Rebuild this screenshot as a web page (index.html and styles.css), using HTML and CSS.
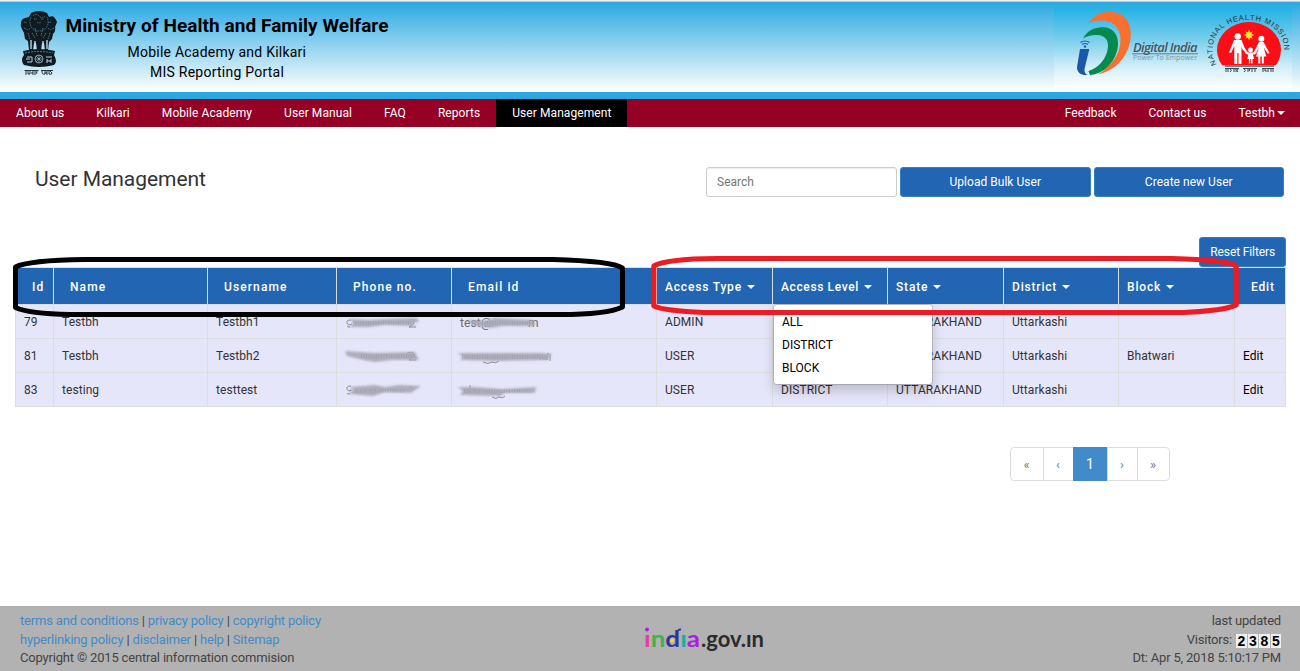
FILE: index.html
```html
<!DOCTYPE html>
<html lang="en">
<head>
<meta charset="utf-8">
<title>User Management</title>
<link rel="stylesheet" href="styles.css">
</head>
<body>
<header class="banner">
  <div class="brand">
    <svg class="emblem" width="38" height="66" viewBox="0 0 38 66">
      <g fill="#101a21">
        <path d="M11 2Q19-2 27 2L29 6Q34 3 37 11L35 16Q36 20 33 23L32 28L29 31L28 39H25L24 32L22 32L21 39H17L16 32L14 32L13 39H9L8 30L5 28L4 22L1 16Q0 8 5 7L9 6Z"/>
        <path d="M3 40Q19 36 35 40L34 44Q38 51 34 54Q19 58 4 54Q0 49 4 44Z"/>
      </g>
      <g fill="none" stroke="#6fb4d2" stroke-width=".6">
        <path d="M13 5q3-3 6 0t6 0M14 8h3m4 0h3M17 11q2 2 4 0M4 11l3 1m24-1l-3 1M11 6q-3 7 2 12q6 4 12 0q5-5 2-12M4 17q5 3 6 0M34 17q-5 3-6 0M15 17l2 8m6-8l-2 8M8 22l2 6m20-6l-2 6M12 22l3 5m11-5l-3 5" stroke-dasharray="1.5 1"/>
        <path d="M11 29v9m4-8v8m8-8v8m4-9v9" stroke="#c4e6f3" stroke-width="1.3"/>
        <path d="M5 42q14-3 28 0" stroke-dasharray="2 1"/>
        <g stroke="#c4e6f3"><circle cx="19" cy="48" r="4"/><path d="M19 44v8m-4-4h8m-7-3l6 6m0-6l-6 6" stroke-width=".5"/>
        <path d="M7 46h5v5h-5m3-3H6M26 46h6m-5 2v4m4-4v4m-4-2h4" stroke-width=".9"/></g>
      </g>
      <g stroke="#17232b" fill="none" stroke-width=".9"><path d="M4.500 59.500h14M21 59.500h12M6 60v4m2-4v3h2v-3m3 0v4m0-2h-2m4-2v4m2-4q-1 3 0 3M22 60q0 4 3 3v-3m2 0v4m0-2h-2m4-2v3q3 1 3-1l-2-2"/></g>
    </svg>
    <div class="brand-text">
      <div class="ministry">Ministry of Health and Family Welfare</div>
      <div class="line academy">Mobile Academy and Kilkari</div>
      <div class="line portal">MIS Reporting Portal</div>
    </div>
  </div>
  <svg class="partners" width="238" height="81" viewBox="1054 7 238 81">
    <defs>
      <linearGradient id="sky" x1="0" y1="0" x2="0" y2="1"><stop offset="0" stop-color="#1fb1e4"/><stop offset=".4" stop-color="#78ceec"/><stop offset=".75" stop-color="#d4eff9"/><stop offset="1" stop-color="#fff"/></linearGradient>
      <path id="arc" d="M1216.500 64.500C1206 46 1216 20.500 1248 20C1281 20.500 1291 46 1280 65"/>
      <clipPath id="dome"><rect x="1210" y="15" width="80" height="50.500"/></clipPath>
    </defs>
    <rect x="1054" y="7" width="238" height="81" fill="url(#sky)"/>
    <path fill="#f96f2f" d="M1089 23C1096 11 1110 9 1120 14C1132 20 1133 36 1128 49C1122 63 1112 71 1098 74.500C1112 66 1121 52 1120.500 39C1120 24 1109 20 1101 20.500C1096 20.500 1092 21.500 1089 23Z"/>
    <path fill="#048a4c" d="M1083 38.500C1088 29 1097 26 1106 27.500C1116 29.500 1119.500 39 1117.500 49C1114 64 1103 74 1090 75.200L1088.500 71C1099 68 1107 58 1108 47C1108.500 39 1104 35.500 1098 35C1092 34.500 1087 36 1083 38.500Z"/>
    <path fill="#1b57a8" d="M1080 49H1089.300L1084.500 69Q1084 74 1088 75C1081 75.500 1077 73 1077 67Z"/>
    <g fill="none" stroke="#1b57a8" stroke-width="1.100"><path d="M1080.500 42.500q4.500-3 9 0M1082 44.500q3-2 6 0"/><circle cx="1085" cy="46.500" r=".7"/></g>
    <text class="di-name" x="1133" y="51.800" textLength="64.500">Digital India</text>
    <path d="M1132 53.800h66" stroke="#55636b" stroke-width=".8"/>
    <text class="di-tag" x="1133" y="60.300" textLength="64">Power To Empower</text>
    <ellipse cx="1249" cy="50" rx="32" ry="28" fill="#fd0d16" clip-path="url(#dome)"/>
    <path d="M1225 66.200h49" stroke="#222" stroke-width=".8"/>
    <g fill="#ffe326"><circle cx="1249" cy="35" r="3"/><path d="M1249 29.500l1 3h-2zM1249 40.500l1-3h-2zM1243.500 35l3-1v2zM1254.500 35l-3-1v2zM1245 31l3 2-1 1zM1253 31l-3 2 1 1zM1245 39l3-2-1-1zM1253 39l-3-2 1-1z"/></g>
    <g fill="#fff">
      <circle cx="1237.700" cy="36.500" r="3.200"/><circle cx="1261.300" cy="38.700" r="3"/><circle cx="1250.500" cy="50" r="2.400"/>
      <path d="M1234 40h7.500l3 7.500 4 6-1.500 1-4.800-5.500-.7-3V64h-3V53h-1.200v11h-3V46l-3.300 7-2-.6z"/>
      <path d="M1259 42h4.500l6 11-1.700.8-4-6.300 2.500 9h-2.500v7h-2v-7h-1.500v7h-2v-7h-2.300l3-9-4 7-2-.7z"/>
      <path d="M1248.500 52.500h4.200l3.500-.8.500 1.200-3.700 1.800 1.200 4.300h-1.700v4.500h-1.300v-4.500h-1v4.500h-1.300v-4.500h-1.600l1-4.300-3.500-1.700.5-1.200z"/>
    </g>
    <text class="nhm"><textPath href="#arc" textLength="120">NATIONAL HEALTH MISSION</textPath></text>
    <g fill="none" stroke="#2a3338" stroke-width=".9"><path d="M1225 68.500h14M1243 68.500h14M1262 68.500h12M1226 69v3m2-3v3m2-3q3 1 0 3m4-3v3m2-3v3m2-3q-2 2 0 3M1244 69q3 1 0 3m4-3v3m2-3q-2 1 0 2m2-2v3m3-3v3M1263 69v3m2-3v2h2m1-2v3m3-3v3m2-3v3"/></g>
  </svg>
</header>
<nav class="nav">
  <a>About us</a><a>Kilkari</a><a>Mobile Academy</a><a>User Manual</a><a>FAQ</a><a>Reports</a><a class="active">User Management</a>
  <a class="push">Feedback</a><a>Contact us</a><a class="account">Testbh<i class="caret"></i></a>
</nav>
<main class="content">
  <div class="toolbar">
    <h1>User Management</h1>
    <div class="actions">
      <input class="search" type="text" placeholder="Search">
      <button class="btn wide">Upload Bulk User</button>
      <button class="btn wide">Create new User</button>
    </div>
  </div>
  <div class="reset"><button class="btn">Reset Filters</button></div>
  <div class="table-wrap">
    <table class="users">
      <colgroup><col class="c-id"><col class="c-name"><col class="c-user"><col class="c-phone"><col class="c-email"><col class="c-b"><col class="c-a"><col class="c-b"><col class="c-a"><col class="c-b"><col class="c-edit"></colgroup>
      <thead><tr>
        <th class="plain">Id</th><th class="plain">Name</th><th class="plain">Username</th><th class="plain">Phone no.</th><th class="plain">Email id</th>
        <th>Access Type<i class="caret"></i></th>
        <th class="level">Access Level<i class="caret"></i>
          <ul class="menu"><li>ALL</li><li>DISTRICT</li><li>BLOCK</li></ul></th>
        <th>State<i class="caret"></i></th><th>District<i class="caret"></i></th><th>Block<i class="caret"></i></th><th class="plain edit">Edit</th>
      </tr></thead>
      <tbody>
        <tr><td>79</td><td>Testbh</td><td>Testbh1</td>
          <td><svg class="smudge" width="82" height="22" viewBox="0 0 82 22"><g class="trace"><path d="M6 8q-5 0-4 3t5 1M5 15q-3 0-3-1M64 8q5-1 5 2t-5 5h7"/></g><path class="smear" d="M4 7L24 8 40 7 72 6 74 10 66 11 72 14 40 13 24 15 4 15 9 11Z"/><path class="grain" d="M8 11h60"/></svg></td>
          <td><svg class="smudge" width="100" height="22" viewBox="0 0 100 22"><text x="0" y="15">test@</text><text x="68" y="15">m</text><path class="smear" d="M8 8L24 9 35 6 70 8 75 10 74 14 42 14 32 16 12 13Z"/><path class="grain" d="M12 11h62"/></svg></td>
          <td>ADMIN</td><td></td><td>UTTARAKHAND</td><td>Uttarkashi</td><td></td><td></td></tr>
        <tr><td>81</td><td>Testbh</td><td>Testbh2</td>
          <td><svg class="smudge" width="82" height="22" viewBox="0 0 82 22"><g class="trace"><path d="M62 7q6-2 7 1t-5 6h7"/></g><path class="smear" d="M0 5L16 6 30 7 70 6 74 14 48 14 30 16 18 14 2 10Z"/><path class="grain" d="M16 10h54"/></svg></td>
          <td><svg class="smudge" width="100" height="22" viewBox="0 0 100 22"><g class="trace"><path d="M23 16q5 3 9 0q4 2 7-1M80 14q2-10 4 0q1-9 3 0v-6q4-2 3 7"/></g><path class="smear" d="M-2 7L35 7 80 7 92 8 88 14 34 15 0 14 3 11Z"/><path class="grain" d="M2 11h84"/></svg></td>
          <td>USER</td><td>DISTRICT</td><td>UTTARAKHAND</td><td>Uttarkashi</td><td>Bhatwari</td><td class="link">Edit</td></tr>
        <tr><td>83</td><td>testing</td><td>testtest</td>
          <td><svg class="smudge" width="82" height="22" viewBox="0 0 82 22"><g class="trace"><path d="M6 6q-5 0-4 3t5 1M5 14q-3 0-3-1M64 7q5-1 4 2"/></g><path class="smear" d="M4 7L30 5 40 7 54 5 76 6 66 13 40 12 28 16 4 14 9 10Z"/><path class="grain" d="M5 11h54"/></svg></td>
          <td><svg class="smudge" width="100" height="22" viewBox="0 0 100 22"><g class="trace"><path d="M10 5v8M32 17q4 3 7 0q4 2 6-1"/></g><path class="smear" d="M-2 7L14 7 42 9 76 7 75 13 45 13 40 16 0 15 3 11Z"/><path class="grain" d="M4 11h66"/></svg></td>
          <td>USER</td><td>DISTRICT</td><td>UTTARAKHAND</td><td>Uttarkashi</td><td></td><td class="link">Edit</td></tr>
      </tbody>
    </table>
    <!-- hand-drawn rings around the two header groups -->
    <svg class="rings" width="1300" height="70" viewBox="0 250 1300 70">
      <path stroke="#000" d="M15.500 307.500V267C25 262 45 260 85 259.500H553C590 260.500 615 263 622.500 268V307C612 312 590 314.500 560 314.500H70C45 314 25 312 15.500 307.500Z"/>
      <path stroke="#ed1c24" d="M653.800 306V266C662 261 685 258.700 717 258.500H1172C1205 259.500 1228 261 1236.300 266V305C1228 309 1205 312 1183 312.400H704C680 311.500 662 310 653.800 306Z"/>
    </svg>
  </div>
  <ul class="pages"><li>«</li><li class="narrow">‹</li><li class="current">1</li><li class="narrow">›</li><li class="last">»</li></ul>
</main>
<footer class="footer">
  <div class="legal"><a>terms and conditions</a> | <a>privacy policy</a> | <a>copyright policy</a><br><a>hyperlinking policy</a> | <a>disclaimer</a> | <a>help</a> | <a>Sitemap</a><br>Copyright © 2015 central information commision</div>
  <svg class="india" width="124" height="34" viewBox="642 622 124 34">
    <g class="colour"><text x="644" y="647" textLength="56" lengthAdjust="spacingAndGlyphs"><tspan fill="#e0409f">ı</tspan><tspan fill="#3fb549">n</tspan><tspan fill="#31359b">d</tspan><tspan fill="#1bae9b">ı</tspan><tspan fill="#aa1fdf">a</tspan></text></g>
    <circle cx="647" cy="629.500" r="1.900" fill="#aa1fdf"/><circle cx="672" cy="640.500" r="2" fill="#ffd52e"/><path d="M678.500 631q0-2 2.500-1.500" stroke="#31359b" stroke-width="2" fill="none"/>
    <text class="gov" x="701" y="647" textLength="63" lengthAdjust="spacingAndGlyphs">.gov.ın</text>
  </svg>
  <div class="stats">last updated<br><span class="visitors">Visitors: <span class="digits"><b>2</b><b>3</b><b>8</b><b>5</b></span></span><br>Dt: Apr 5, 2018 5:10:17 PM</div>
</footer>
</body>
</html>
```
FILE: styles.css
```css
* { box-sizing: border-box; }
body { margin: 0; height: 671px; display: flex; flex-direction: column; background: #fff; color: #333; font: 12px/17px Roboto, "Liberation Sans", sans-serif; overflow: hidden; }
svg { display: block; }

.banner { height: 99px; border-top: 1px solid #f1f0ee; border-bottom: 7px solid #29a9e1; background: linear-gradient(#c5c9c9 1px, #29a9e1 1px, #fff 100%); display: flex; justify-content: space-between; padding: 6px 8px 0 20px; }
.brand { display: flex; padding-top: 4px; gap: 7.500px; }
.brand-text { color: #000; padding-top: 4px; white-space: nowrap; }
.ministry { font-size: 19px; line-height: 22px; font-weight: 700; letter-spacing: .06px; }
.line { font-size: 14px; line-height: 20px; letter-spacing: .23px; }
.academy { margin-top: 5px; padding-left: 62px; }
.portal { padding-left: 84.500px; letter-spacing: .24px; }
.di-name { font: italic 600 13px "Open Sans", sans-serif; fill: #4b565c; }
.di-tag { font: 7px "Open Sans", sans-serif; fill: #7a97a4; }
.nhm { font: 7.5px "Liberation Sans", sans-serif; fill: #26353d; }

.nav { height: 28px; flex: none; background: #960024; display: flex; }
.nav a { color: #fff; padding: 0 16px; line-height: 28px; letter-spacing: .075px; white-space: nowrap; }
.nav .active { background: #000; }
.nav .push { margin-left: auto; }
.nav .push, .nav .push ~ a { letter-spacing: .02px; }
.nav .account { padding-right: 15px; }
.caret { display: inline-block; border: 4px solid transparent; border-top-color: currentColor; border-bottom: 0; margin-left: 2px; vertical-align: 2px; }

.content { flex: 1; padding: 40px 14px 0 15px; }
.toolbar { height: 70px; display: flex; justify-content: space-between; padding: 0 2px 0 20px; }
h1 { margin: 0; font-size: 21px; line-height: 25px; font-weight: 400; letter-spacing: -.05px; }
.actions { display: flex; gap: 3px; height: 30px; }
.search { width: 191px; height: 30px; border: 1px solid #ccc; border-radius: 3px; padding: 0 10px; font: inherit; box-shadow: inset 0 1px 1px rgba(0,0,0,.075); }
.search::placeholder { color: #757575; opacity: 1; }
.btn { height: 30px; padding: 0 10px; border: 1px solid #357ebd; border-radius: 3px; background: #2165b3; color: #fff; font: inherit; letter-spacing: .03px; }
.wide { width: 190.500px; }
.reset { display: flex; justify-content: flex-end; height: 30px; }
.reset .btn { letter-spacing: -.12px; }

.table-wrap { position: relative; }
.users { width: 1271px; table-layout: fixed; border-collapse: collapse; }
.c-id { width: 38px; } .c-name { width: 154px; } .c-user { width: 129px; } .c-phone { width: 115px; } .c-email { width: 205px; }
.c-a { width: 115px; } .c-b { width: 116px; } .c-edit { width: 51px; }
.users th, .users td { border: 1px solid #ddd; text-align: left; padding: 2px 0 0 8px; white-space: nowrap; }
.users th { height: 37px; background: #2165b3; color: #fff; font-weight: 500; letter-spacing: .82px; }
.users th.level { letter-spacing: .62px; }
.users th.plain { padding-left: 16px; letter-spacing: 1.1px; }
.users th.edit { letter-spacing: .8px; }
.users th .caret { margin-left: 5px; }
.users td { height: 34px; background: #e6e6fa; letter-spacing: .06px; }
.users td.link { color: #000; }
.level { position: relative; }
.menu { position: absolute; left: 0; top: 36px; width: 160px; height: 81px; margin: 0; padding: 6px 8px; list-style: none; background: #fff; border: 1px solid rgba(0,0,0,.15); border-radius: 4px; background-clip: padding-box; box-shadow: 0 6px 12px rgba(0,0,0,.175); color: #000; font-weight: 400; letter-spacing: 0; }
.menu li { line-height: 23px; }
.rings { position: absolute; left: -15px; top: -17px; fill: none; stroke-width: 5; stroke-linejoin: round; z-index: 2; }
.smudge { overflow: visible; }
.smudge text { font-size: 12px; fill: #666; }
.smear { fill: #adadbb; filter: blur(1.2px); }
.grain { fill: none; stroke: #88889a; stroke-width: 4; stroke-dasharray: 1 1.500; opacity: .3; filter: blur(.6px); }
.trace { fill: none; stroke: #666; stroke-width: .7; }

.pages { display: flex; justify-content: flex-end; margin: 40px 116px 0 0; padding: 0; list-style: none; color: #777; }
.pages li { width: 34px; height: 34px; border: 1px solid #ddd; margin-left: -1px; text-align: center; line-height: 34px; font-size: 13px; padding-right: 1px; }
.pages .narrow { width: 31px; }
.pages .current { width: 35px; background: #428bca; border-color: #428bca; color: #fff; font-size: 14px; line-height: 32px; }
.pages li:first-child { border-radius: 4px 0 0 4px; }
.pages .last { width: 33px; border-radius: 0 4px 4px 0; }

.footer { height: 65px; background: #b2b2b2; padding: 6px 19px 0 20px; display: grid; grid-template-columns: 622px 124px 1fr; font-size: 13px; line-height: 18.570px; color: #444; }
.footer a { color: #428bca; }
.legal { letter-spacing: -.18px; }
.india { margin-top: 10px; }
.colour { font: 700 23px Lato, sans-serif; }
.gov { font: 700 23px Lato, sans-serif; fill: #2b2b2b; }
.stats { text-align: right; letter-spacing: -.2px; }
.digits { display: inline-flex; gap: 1px; height: 14px; vertical-align: -2px; margin-left: 1px; }
.digits b { width: 10.500px; background: #eee; color: #000; font: 700 14px/15px "Liberation Sans", sans-serif; text-align: center; }
```
